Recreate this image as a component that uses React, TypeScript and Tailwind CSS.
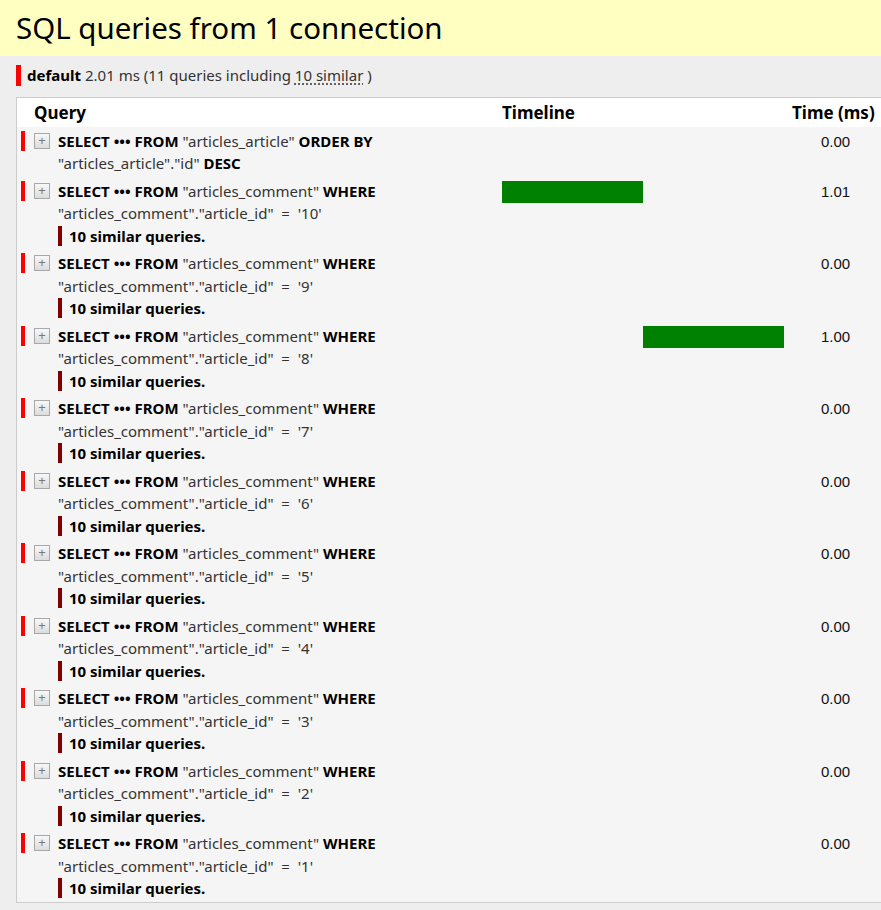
import React from "react";

const rows = [
  { table: "articles_article", cond: "ORDER BY", line2a: '"articles_article"."id"', line2b: "DESC", time: "0.00", bar: null as null | [number, number], similar: false },
  ...[10, 9, 8, 7, 6, 5, 4, 3, 2, 1].map((n) => ({
    table: "articles_comment",
    cond: "WHERE",
    line2a: `"articles_comment"."article_id"  =  '${n}'`,
    line2b: "",
    time: n === 10 ? "1.01" : n === 8 ? "1.00" : "0.00",
    bar: n === 10 ? ([0, 141] as [number, number]) : n === 8 ? ([141, 141] as [number, number]) : null,
    similar: true,
  })),
];

function PlusBox() {
  return (
    <div className="mt-[3px] flex h-[16px] w-[16px] items-center justify-center border border-[#a8a8a8] bg-gradient-to-b from-[#f8f8f8] to-[#dcdcdc] text-[13px] leading-none text-[#777]">
      <span className="-mt-px">+</span>
    </div>
  );
}

export default function App() {
  return (
    <div
      className="h-[910px] w-[881px] overflow-hidden bg-[#eeeeee] text-black"
      style={{ fontFamily: '"Noto Sans", "Noto Sans CJK KR", sans-serif' }}
    >
      <div className="flex h-[56px] items-center bg-[#ffffc2] pl-[16px]">
        <h3 className="text-[29.5px] font-normal leading-none">SQL queries from 1 connection</h3>
      </div>
      <div className="flex h-[41px] items-center pb-[2px] pl-[16px] text-[15px]">
        <span className="mr-[6px] h-[21px] w-[5px] bg-[#ff0000]" />
        <span className="font-bold">default</span>
        <span className="ml-[4px] text-[#333]">
          2.01 ms (11 queries including{" "}
          <abbr className="underline decoration-dotted underline-offset-2">10 similar</abbr> )
        </span>
      </div>
      <div className="ml-[16px] w-[880px] border border-[#cccccc] bg-[#f5f5f5]">
        <div className="flex h-[29px] items-center bg-white text-[17px] font-bold">
          <div className="w-[485px] pl-[17px]">Query</div>
          <div className="w-[290px]">Timeline</div>
          <div>Time (ms)</div>
        </div>
        {rows.map((r, i) => (
          <div key={i} className="flex py-[2.5px] text-[15px] leading-[22.5px]">
            <div className="flex w-[485px] items-start">
              <span className="ml-[4px] mt-[1px] h-[20px] w-[4px] bg-[#ff0000]" />
              <div className="ml-[9px]">
                <PlusBox />
              </div>
              <div className="ml-[8px]">
                <div>
                  <b>SELECT ••• FROM</b>{" "}
                  <span className="text-[#333]">"{r.table}"</span> <b>{r.cond}</b>
                </div>
                <div className="whitespace-pre text-[#333]">
                  {r.line2a}
                  {r.line2b && (
                    <>
                      {" "}
                      <b className="text-black">{r.line2b}</b>
                    </>
                  )}
                </div>
                {r.similar && (
                  <div className="flex items-center font-bold">
                    <span className="mr-[7px] h-[20px] w-[4px] bg-[#800000]" />
                    10 similar queries.
                  </div>
                )}
              </div>
            </div>
            <div className="w-[319px] pt-px">
              <div className="relative h-[22px] w-[282px]">
                {r.bar && (
                  <div
                    className="absolute top-0 h-[22px] bg-[#008000]"
                    style={{ left: r.bar[0], width: r.bar[1] }}
                  />
                )}
              </div>
            </div>
            <div
              className="pt-px text-[15px] text-[#111]"
              style={{ fontFamily: '"Liberation Sans", Arial, sans-serif' }}
            >
              {r.time}
            </div>
          </div>
        ))}
      </div>
    </div>
  );
}
